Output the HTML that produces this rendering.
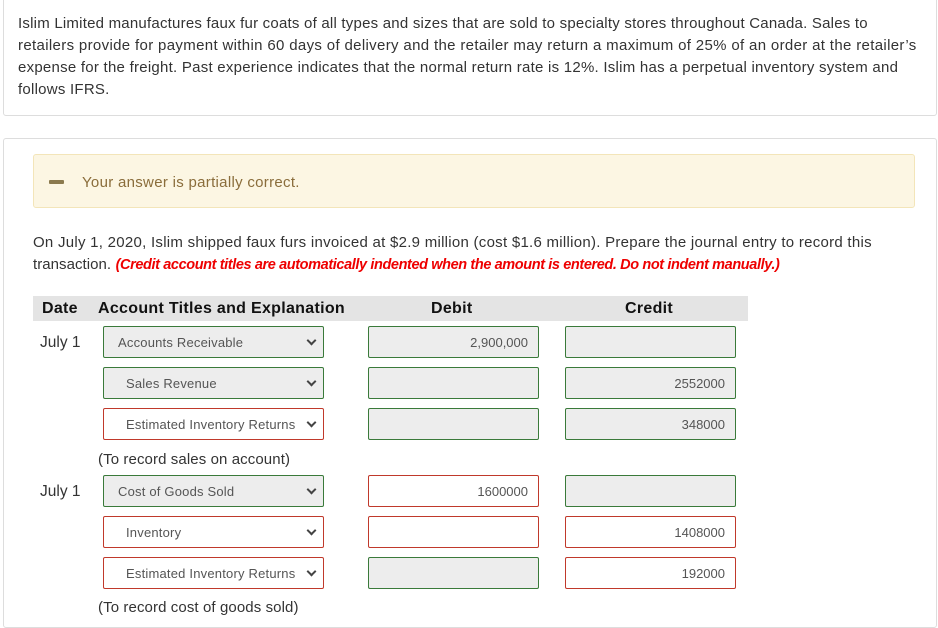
<!DOCTYPE html>
<html><head><style>
*{box-sizing:border-box;margin:0;padding:0}
body{width:938px;height:615px;overflow:hidden;background:#fff;font-family:"Liberation Sans",sans-serif;color:#333;position:relative}
.card{position:absolute;left:3px;right:1px;border:1px solid #ddd;border-radius:3px;background:#fff}
.p{position:absolute;font-size:15px;line-height:22px;color:#333;white-space:nowrap;letter-spacing:0.25px}
.banner{position:absolute;left:33px;top:154px;width:882px;height:54px;background:#fcf6e3;border:1px solid #f3e5b9;border-radius:3px}
.dash{position:absolute;left:15px;top:25px;width:15px;height:4px;background:#8b7a4e;border-radius:1px}
.btxt{position:absolute;left:48px;top:19px;font-size:15px;color:#8a6d3b;letter-spacing:0.3px}
.hdr{position:absolute;left:33px;top:296px;width:715px;height:25px;background:#e4e4e4;font-weight:bold;font-size:16px;color:#111;letter-spacing:0.3px}
.hdr span{position:absolute;top:4px}
.sel{position:absolute;left:103px;width:221px;height:32px;border:1px solid #3a7a3a;border-radius:2px;background:#ededed;font-size:13px;color:#555;line-height:32px;letter-spacing:0.2px}
.sel.r{border-color:#c0392b;background:#fff}
.sel::after{content:"";position:absolute;right:8px;top:10px;width:5px;height:5px;border-right:2px solid #444;border-bottom:2px solid #444;transform:rotate(45deg)}
.in{position:absolute;width:171px;height:32px;border:1px solid #3a7a3a;border-radius:2px;background:#ededed;font-size:13px;color:#555;line-height:32px;text-align:right;padding-right:10px}
.in.r{border-color:#c0392b;background:#fff}
.d{left:368px}.c{left:565px}
.lbl{position:absolute;left:40px;font-size:15.5px;color:#333}
.note{position:absolute;left:98px;font-size:15px;color:#333;letter-spacing:0.1px}
</style></head><body>
<div class="card" style="top:-4px;height:120px"></div>
<div class="p" style="left:18px;top:13px"><span style="letter-spacing:0.22px">Islim Limited manufactures faux fur coats of all types and sizes that are sold to specialty stores throughout Canada. Sales to</span><br><span style="letter-spacing:0.34px">retailers provide for payment within 60 days of delivery and the retailer may return a maximum of 25% of an order at the retailer’s</span><br><span style="letter-spacing:0.25px">expense for the freight. Past experience indicates that the normal return rate is 12%. Islim has a perpetual inventory system and</span><br>follows IFRS.</div>
<div class="card" style="top:138px;height:490px"></div>
<div class="banner"><div class="dash"></div><div class="btxt">Your answer is partially correct.</div></div>
<div class="p" style="left:33px;top:232px;letter-spacing:0.27px">On July 1, 2020, Islim shipped faux furs invoiced at $2.9 million (cost $1.6 million). Prepare the journal entry to record this<br><span style="letter-spacing:0.05px">transaction.</span> <i style="color:#e00;font-weight:bold;font-size:14.5px;letter-spacing:-0.39px">(Credit account titles are automatically indented when the amount is entered. Do not indent manually.)</i></div>
<div class="hdr"><span style="left:9px">Date</span><span style="left:65px">Account Titles and Explanation</span><span style="left:398px">Debit</span><span style="left:592px">Credit</span></div>

<div class="lbl" style="top:334px">July 1</div>
<div class="sel" style="top:326px;padding-left:14px">Accounts Receivable</div>
<div class="in d" style="top:326px">2,900,000</div>
<div class="in c" style="top:326px"></div>

<div class="sel" style="top:367px;padding-left:22px">Sales Revenue</div>
<div class="in d" style="top:367px"></div>
<div class="in c" style="top:367px">2552000</div>

<div class="sel r" style="top:408px;padding-left:22px">Estimated Inventory Returns</div>
<div class="in d" style="top:408px"></div>
<div class="in c" style="top:408px">348000</div>

<div class="note" style="top:451px">(To record sales on account)</div>

<div class="lbl" style="top:483px">July 1</div>
<div class="sel" style="top:475px;padding-left:14px">Cost of Goods Sold</div>
<div class="in d r" style="top:475px">1600000</div>
<div class="in c" style="top:475px"></div>

<div class="sel r" style="top:516px;padding-left:22px">Inventory</div>
<div class="in d r" style="top:516px"></div>
<div class="in c r" style="top:516px">1408000</div>

<div class="sel r" style="top:557px;padding-left:22px">Estimated Inventory Returns</div>
<div class="in d" style="top:557px"></div>
<div class="in c r" style="top:557px">192000</div>

<div class="note" style="top:599px">(To record cost of goods sold)</div>
</body></html>
